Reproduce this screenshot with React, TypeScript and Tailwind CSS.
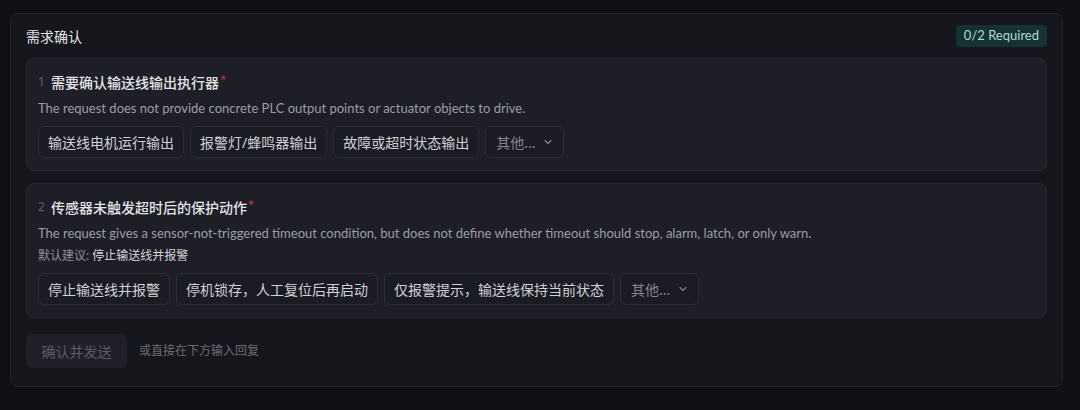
import React from 'react';
import { ChevronDown } from 'lucide-react';

type Question = {
  index: number;
  title: string;
  desc: string;
  suggestion?: string;
  options: string[];
};

const questions: Question[] = [
  {
    index: 1,
    title: '需要确认输送线输出执行器',
    desc: 'The request does not provide concrete PLC output points or actuator objects to drive.',
    options: ['输送线电机运行输出', '报警灯/蜂鸣器输出', '故障或超时状态输出'],
  },
  {
    index: 2,
    title: '传感器未触发超时后的保护动作',
    desc: 'The request gives a sensor-not-triggered timeout condition, but does not define whether timeout should stop, alarm, latch, or only warn.',
    suggestion: '停止输送线并报警',
    options: ['停止输送线并报警', '停机锁存，人工复位后再启动', '仅报警提示，输送线保持当前状态'],
  },
];

const latin = { fontFamily: 'Lato, "Noto Sans CJK SC", sans-serif' };

const QuestionCard: React.FC<{ q: Question }> = ({ q }) => (
  <div className="bg-[#1e1f26] border border-[#26272f] rounded-lg px-[11px] pt-[12px] pb-[12px]">
    {/* Title row */}
    <div className="flex items-center h-[22px]">
      <span className="text-[12px] text-[#5f6068] w-[13px]">{q.index}</span>
      <span className="text-[14px] font-medium text-[#e4e4e7]">{q.title}</span>
      <span className="text-[11px] text-[#a8385a] ml-[1px] -mt-[6px]">*</span>
    </div>
    <p className="text-[13px] text-[#9c9ca3] mt-[5px] leading-[20px]" style={latin}>
      {q.desc}
    </p>
    {q.suggestion && (
      <p className="text-[12px] text-[#8e8e95] mt-[3px] leading-[20px]">
        默认建议: <span className="text-[#d4d4d8]">{q.suggestion}</span>
      </p>
    )}
    <div className={`flex gap-[6px] ${q.suggestion ? 'mt-[7px]' : 'mt-[8px]'}`}>
      {q.options.map((opt) => (
        <button
          key={opt}
          className="h-[32px] px-[9px] rounded-md bg-[#1b1c23] border border-[#2c2e36] text-[14px] text-[#d0d0d5]"
        >
          {opt}
        </button>
      ))}
      <button className="h-[32px] pl-[10px] pr-[9px] rounded-md bg-[#1b1c23] border border-[#2c2e36] text-[14px] text-[#85868d] flex items-center gap-[7px]">
        <span>其他...</span>
        <ChevronDown className="w-[12px] h-[12px]" strokeWidth={2.25} />
      </button>
    </div>
  </div>
);

export default function App() {
  return (
    <div
      className="w-[1080px] h-[410px] bg-[#101117] pt-[13px] pl-[10px]"
      style={{ fontFamily: '"Noto Sans", "Noto Sans CJK SC", sans-serif' }}
    >
      <div className="w-[1053px] h-[374px] bg-[#16171d] border border-[#22242b] rounded-lg px-[15px] pt-[11px]">
        <div className="flex items-center justify-between h-[22px]">
          <h2 className="text-[14px] text-[#e4e4e7]">需求确认</h2>
          <span
            className="h-[22px] px-[8px] rounded bg-[#163131] text-[13px] text-[#a9dcd7] flex items-center"
            style={latin}
          >
            0/2 Required
          </span>
        </div>

        <div className="flex flex-col gap-[12px] mt-[11px]">
          {questions.map((q) => (
            <QuestionCard key={q.index} q={q} />
          ))}
        </div>

        <div className="flex items-center gap-[12px] mt-[16px]">
          <button className="h-[34px] w-[101px] rounded-md bg-[#202128] text-[14px] text-[#5b5c62]">
            确认并发送
          </button>
          <span className="text-[12px] text-[#6c6d73]">或直接在下方输入回复</span>
        </div>
      </div>
    </div>
  );
}
